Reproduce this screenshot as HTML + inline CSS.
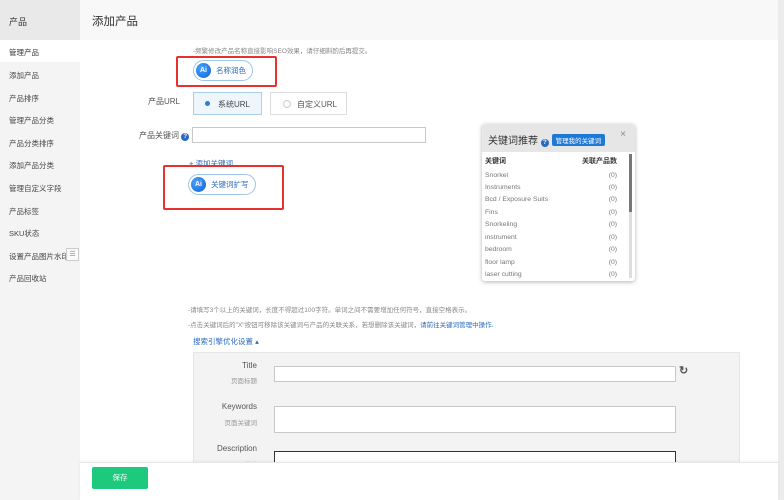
<!DOCTYPE html>
<html><head><meta charset="utf-8"><style>
*{box-sizing:border-box;margin:0;padding:0}
body{width:784px;height:500px;overflow:hidden;background:#fff;font-family:"Liberation Sans","Noto Sans CJK SC",sans-serif;position:relative;color:#333}
.a{position:absolute}
.side{left:0;top:0;width:80px;height:500px;background:#f4f4f4}
.side .hd{position:absolute;left:0;top:0;width:80px;height:40px;background:#e9e9e9;font-size:9px;padding:15px 0 0 9px}
.side .it{position:absolute;left:0;width:80px;height:22px;font-size:7.5px;padding:7px 0 0 9px;color:#444}
.top{left:80px;top:0;width:698px;height:40px;background:#f8f8f8;font-size:11.5px;padding:13px 0 0 12px;color:#333}
.sb{left:778px;top:0;width:6px;height:500px;background:#ececec}
.sm{font-size:6.5px;color:#888}
.pill{border:1px solid #9cc6ea;border-radius:11px;background:#fff;font-size:7.5px;color:#2a6bbf;display:flex;align-items:center}
.ai{width:15px;height:15px;border-radius:50%;background:radial-gradient(circle at 35% 35%,#49a3ff,#0d5fd6);color:#fff;font-size:7px;font-weight:bold;display:flex;align-items:center;justify-content:center;margin:0 5px 0 2px}
.red{border:2px solid #e5322e;border-radius:2px}
.q{display:inline-block;width:8px;height:8px;border-radius:50%;background:#2a6bbf;color:#fff;font-size:6px;text-align:center;line-height:8px;font-weight:bold}
.row{position:absolute;left:485px;width:132px;font-size:6.8px;color:#777}
.row span{float:right}
.lbl{font-size:8px;color:#555;text-align:right;width:60px}
.lbl2{font-size:6.5px;color:#999;text-align:right;width:60px}
.inp{background:#fff;border:1px solid #c8c8c8}
</style></head><body>
<div class="a side">
<div class="hd">产品</div>
<div class="it" style="top:40px;background:#fff;color:#333">管理产品</div>
<div class="it" style="top:63px">添加产品</div>
<div class="it" style="top:86px">产品排序</div>
<div class="it" style="top:108px">管理产品分类</div>
<div class="it" style="top:131px">产品分类排序</div>
<div class="it" style="top:153px">添加产品分类</div>
<div class="it" style="top:176px">管理自定义字段</div>
<div class="it" style="top:199px">产品标签</div>
<div class="it" style="top:221px">SKU状态</div>
<div class="it" style="top:244px">设置产品图片水印</div>
<div class="it" style="top:266px">产品回收站</div>
</div>
<div class="a" style="left:66px;top:248px;width:13px;height:13px;border:1px solid #ccc;background:#fafafa;font-size:7px;text-align:center;line-height:11px;color:#888">☰</div>
<div class="a top">添加产品</div>
<div class="a sb"></div>

<div class="a sm" style="left:193px;top:45px">-频繁修改产品名称直接影响SEO效果，请仔细斟酌后再提交。</div>
<div class="a red" style="left:176px;top:56px;width:101px;height:31px"></div>
<div class="a pill" style="left:193px;top:60px;width:60px;height:21px"><div class="ai">Ai</div>名称润色</div>

<div class="a" style="left:148px;top:96px;font-size:8px;color:#555">产品URL</div>
<div class="a" style="left:193px;top:92px;width:69px;height:23px;border:1px solid #a9cfee;background:#eef6fc;font-size:8px;color:#444;padding:6px 0 0 11px"><span style="display:inline-block;width:5px;height:5px;border-radius:50%;background:#2a7fd6;margin-right:8px;vertical-align:1px"></span>系统URL</div>
<div class="a" style="left:270px;top:92px;width:77px;height:23px;border:1px solid #ddd;background:#fff;font-size:8px;color:#555;padding:6px 0 0 12px"><span style="display:inline-block;width:8px;height:8px;border-radius:50%;border:1px solid #ccc;margin-right:6px;vertical-align:-1px"></span>自定义URL</div>

<div class="a" style="left:139px;top:130px;font-size:8px;color:#555">产品关键词 <span class="q">?</span></div>
<div class="a inp" style="left:192px;top:127px;width:234px;height:16px"></div>
<div class="a" style="left:189px;top:158px;font-size:7.5px;color:#2a6bbf">+ 添加关键词</div>
<div class="a red" style="left:163px;top:165px;width:121px;height:45px"></div>
<div class="a pill" style="left:188px;top:174px;width:68px;height:21px"><div class="ai">Ai</div>关键词扩写</div>

<div class="a" style="left:482px;top:124px;width:153px;height:157px;background:#fff;box-shadow:0 1px 4px rgba(0,0,0,.3);border-radius:3px;overflow:hidden">
<div style="height:28px;background:#e6e6e6;padding:8px 0 0 6px;font-size:10px;color:#333">关键词推荐 <span class="q">?</span> <span style="display:inline-block;background:#1e78d6;color:#fff;font-size:6.5px;padding:1px 4px;border-radius:2px;vertical-align:1px">管理我的关键词</span><span style="position:absolute;right:9px;top:5px;font-size:10px;color:#888">×</span></div>
<div style="position:absolute;right:3px;top:30px;width:3px;height:124px;background:#ddd"></div>
<div style="position:absolute;right:3px;top:30px;width:3px;height:58px;background:#777"></div>
</div>
<div class="row" style="top:156px;color:#333;font-weight:bold;font-size:7px">关键词<span>关联产品数</span></div>
<div class="row" style="top:172px">Snorkel<span>(0)</span></div>
<div class="row" style="top:184px">Instruments<span>(0)</span></div>
<div class="row" style="top:196px">Bcd / Exposure Suits<span>(0)</span></div>
<div class="row" style="top:209px">Fins<span>(0)</span></div>
<div class="row" style="top:221px">Snorkeling<span>(0)</span></div>
<div class="row" style="top:234px">instrument<span>(0)</span></div>
<div class="row" style="top:246px">bedroom<span>(0)</span></div>
<div class="row" style="top:259px">floor lamp<span>(0)</span></div>
<div class="row" style="top:271px;height:9px;overflow:hidden">laser cutting<span>(0)</span></div>

<div class="a sm" style="left:188px;top:304px">-请填写3个以上的关键词，长度不得超过100字符。单词之间不需要增加任何符号，直接空格表示。</div>
<div class="a sm" style="left:188px;top:319px">-点击关键词后的"X"按钮可移除该关键词与产品的关联关系，若想删除该关键词，<span style="color:#2a6bbf">请前往关键词管理中操作.</span></div>
<div class="a" style="left:193px;top:336px;font-size:7.5px;color:#2a6bbf">搜索引擎优化设置 ▴</div>

<div class="a" style="left:193px;top:352px;width:547px;height:148px;background:#f3f3f3;border:1px solid #e6e6e6"></div>
<div class="a lbl" style="left:197px;top:361px">Title</div>
<div class="a lbl2" style="left:197px;top:375px">页面标题</div>
<div class="a inp" style="left:274px;top:366px;width:402px;height:16px"></div>
<div class="a" style="left:679px;top:364px;font-size:11px;font-weight:bold;color:#555">↻</div>
<div class="a lbl" style="left:197px;top:402px">Keywords</div>
<div class="a lbl2" style="left:197px;top:417px">页面关键词</div>
<div class="a inp" style="left:274px;top:406px;width:402px;height:27px"></div>
<div class="a lbl" style="left:197px;top:444px">Description</div>
<div class="a lbl2" style="left:197px;top:459px">页面描述</div>
<div class="a" style="left:274px;top:451px;width:402px;height:30px;background:#fff;border:1px solid #333"></div>

<div class="a" style="left:80px;top:462px;width:698px;height:38px;background:#fff;border-top:1px solid #e6e6e6;box-shadow:0 -1px 3px rgba(0,0,0,.05)"></div>
<div class="a" style="left:92px;top:467px;width:56px;height:22px;background:#1dc97c;border-radius:2px;color:#fff;font-size:7.5px;text-align:center;line-height:22px">保存</div>
</body></html>
